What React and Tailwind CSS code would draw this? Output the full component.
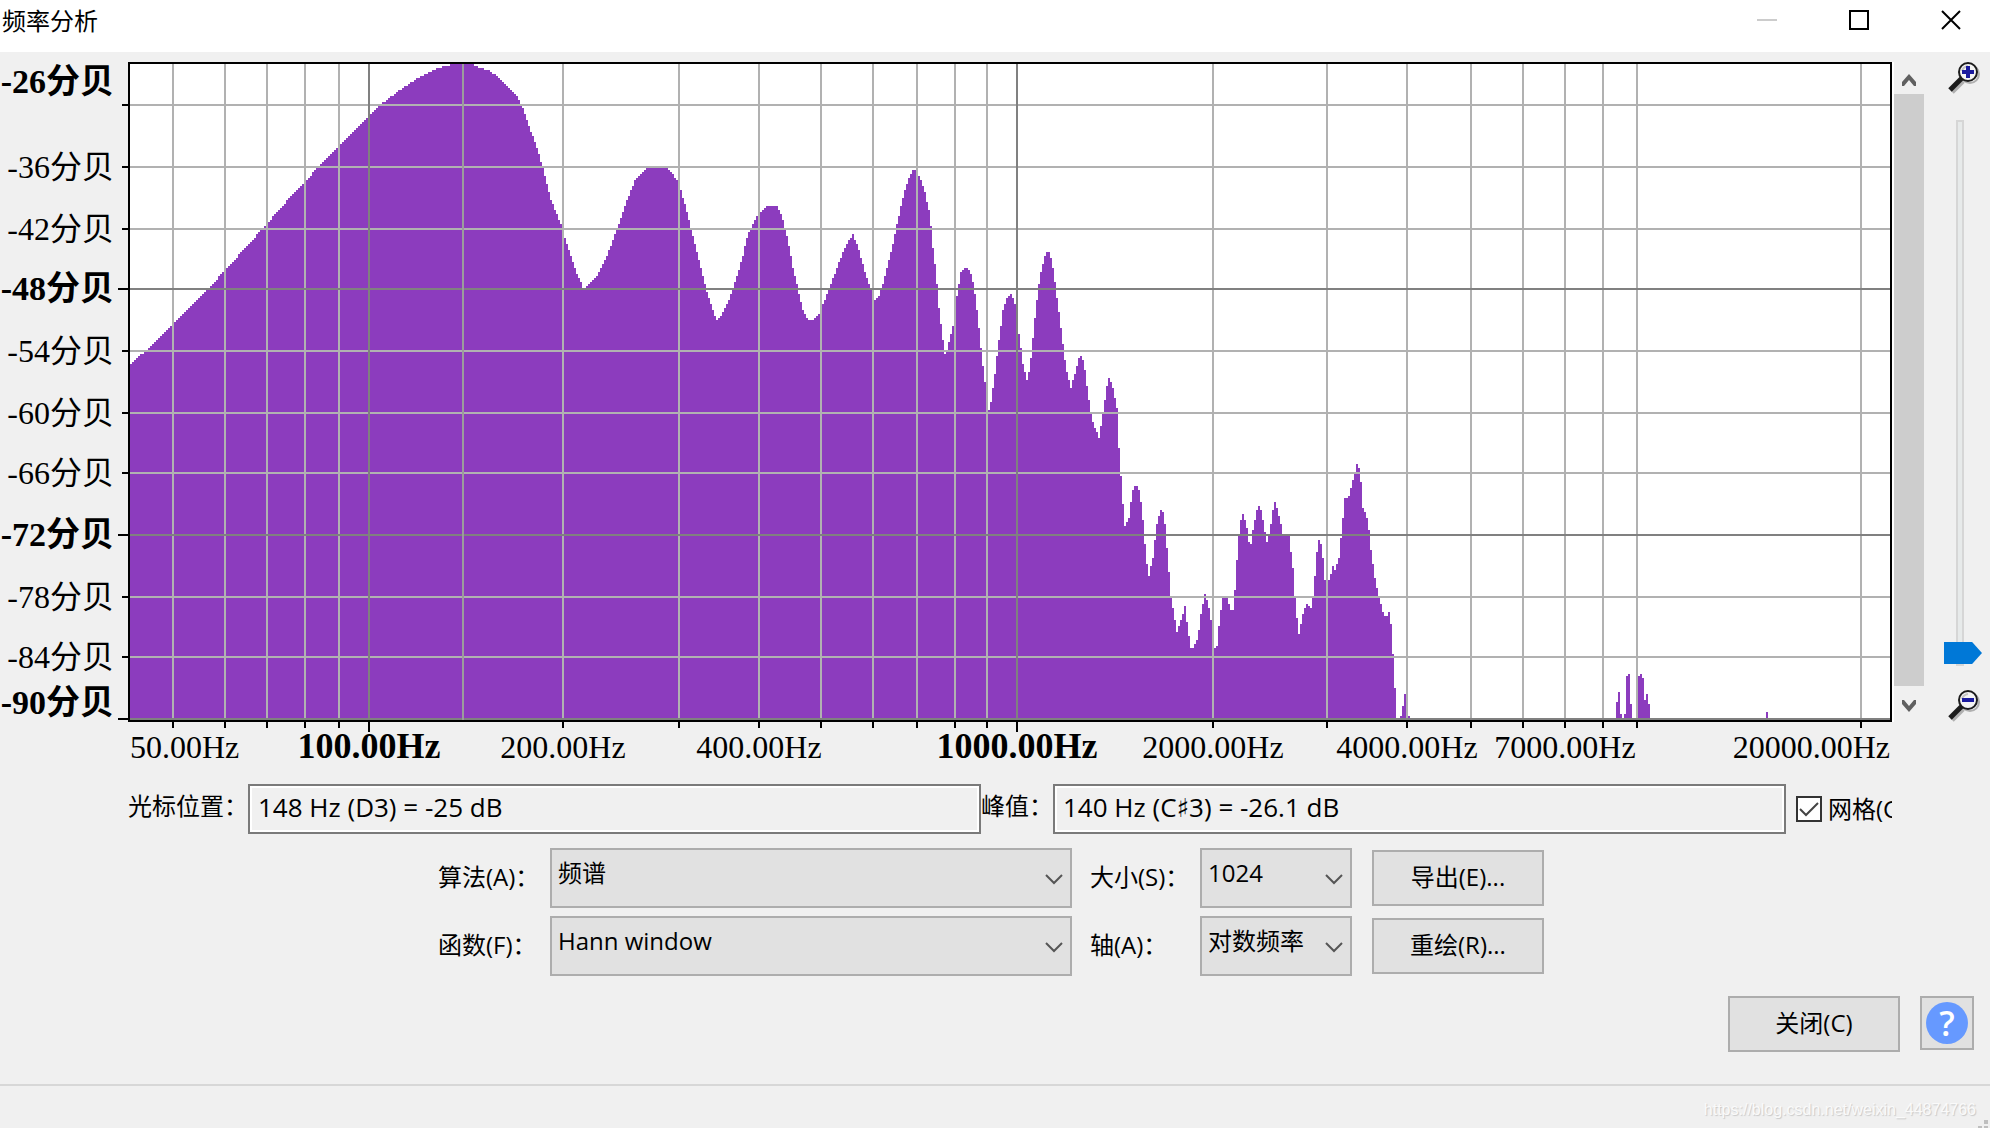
import { useState } from 'react';

// Plot area in drawing units: x 130..1890, y 64..720
const LEFT = 130;
const TOP = 64;
const WIDTH = 1760;
const HEIGHT = 656;
const BOTTOM = TOP + HEIGHT;

const SPECTRUM = [
  [130, 364], [147, 350], [173, 325], [210, 287], [225, 270], [238, 256], [266, 225], [278, 211],
  [295, 192], [305, 182], [320, 165], [339, 146], [369, 115], [379, 106], [393, 95], [406, 86],
  [421, 76], [433, 70], [446, 66], [452, 64], [473, 64], [480, 68], [488, 70], [501, 79],
  [509, 87], [518, 97], [522, 105], [528, 123], [537, 148], [543, 168], [551, 200], [562, 227],
  [568, 247], [577, 273], [583, 287], [585, 288], [592, 282], [598, 274], [606, 258], [613, 240],
  [619, 223], [627, 200], [635, 180], [641, 174], [646, 168], [668, 168], [672, 173], [677, 180],
  [681, 190], [687, 212], [693, 235], [699, 260], [706, 288], [712, 308], [717, 320], [721, 316],
  [728, 303], [733, 289], [738, 273], [743, 255], [748, 233], [754, 222], [759, 213], [766, 206],
  [777, 206], [780, 211], [784, 223], [788, 240], [793, 267], [799, 293], [804, 313], [808, 320],
  [812, 320], [820, 312], [825, 300], [831, 283], [837, 268], [843, 252], [849, 240], [853, 234],
  [859, 250], [865, 272], [871, 290], [875, 300], [880, 294], [886, 273], [892, 248], [898, 220],
  [903, 198], [908, 180], [913, 170], [916, 170], [920, 177], [925, 192], [930, 215], [933, 247],
  [936, 273], [939, 307], [943, 340], [945, 354], [948, 347], [953, 325], [957, 295], [961, 272],
  [964, 268], [968, 268], [972, 277], [975, 293], [979, 327], [982, 357], [985, 382], [989, 410],
  [991, 402], [995, 373], [999, 340], [1003, 310], [1007, 298], [1011, 294], [1015, 303],
  [1019, 333], [1023, 363], [1027, 380], [1030, 367], [1034, 327], [1038, 290], [1042, 267],
  [1046, 253], [1048, 250], [1052, 260], [1056, 290], [1061, 327], [1066, 367], [1071, 387],
  [1075, 373], [1080, 354], [1084, 363], [1088, 393], [1092, 420], [1099, 438], [1103, 413],
  [1107, 385], [1109, 378], [1113, 387], [1117, 407], [1119, 447], [1123, 503], [1125, 526],
  [1129, 517], [1132, 493], [1136, 484], [1140, 492], [1143, 520], [1146, 557], [1149, 576],
  [1153, 557], [1157, 523], [1161, 510], [1164, 513], [1167, 547], [1171, 597], [1177, 632],
  [1181, 620], [1185, 606], [1188, 630], [1191, 647], [1194, 647], [1198, 637], [1201, 613],
  [1205, 594], [1209, 607], [1211, 620], [1214, 648], [1217, 646], [1220, 617], [1223, 598],
  [1227, 598], [1231, 610], [1233, 610], [1236, 580], [1238, 540], [1241, 520], [1243, 514],
  [1247, 527], [1250, 550], [1253, 530], [1257, 510], [1260, 504], [1263, 520], [1267, 542],
  [1270, 532], [1273, 510], [1275, 502], [1279, 515], [1283, 533], [1289, 536], [1293, 567],
  [1296, 610], [1299, 634], [1303, 613], [1306, 604], [1311, 608], [1314, 593], [1316, 557],
  [1319, 540], [1322, 547], [1325, 580], [1329, 580], [1333, 566], [1335, 570], [1339, 557],
  [1342, 527], [1345, 498], [1349, 496], [1353, 480], [1357, 464], [1360, 470], [1363, 507],
  [1368, 520], [1371, 550], [1375, 577], [1379, 597], [1384, 616], [1387, 616], [1389, 612],
  [1391, 623], [1393, 653], [1395, 687],
];

// Isolated columns above the noise floor, each two units wide
const SPIKES = [
  [1400, 716], [1402, 706], [1404, 694], [1408, 716],
  [1616, 702], [1618, 692], [1620, 714], [1624, 714], [1626, 676], [1628, 674], [1630, 704],
  [1638, 676], [1640, 674], [1642, 678], [1644, 700], [1646, 694], [1648, 704],
  [1766, 712],
];

const FREQ_LINES = [
  { x: 173, label: '50.00Hz', anchor: 'start' },
  { x: 225 },
  { x: 267 },
  { x: 305 },
  { x: 339 },
  { x: 369, label: '100.00Hz', major: true },
  { x: 563, label: '200.00Hz' },
  { x: 679 },
  { x: 759, label: '400.00Hz' },
  { x: 821 },
  { x: 873 },
  { x: 917 },
  { x: 955 },
  { x: 987 },
  { x: 1017, label: '1000.00Hz', major: true },
  { x: 1213, label: '2000.00Hz' },
  { x: 1327 },
  { x: 1407, label: '4000.00Hz' },
  { x: 1471 },
  { x: 1523 },
  { x: 1565, label: '7000.00Hz' },
  { x: 1603 },
  { x: 1637 },
  { x: 1861, label: '20000.00Hz', anchor: 'end' },
];

const DB_LINES = [
  { y: 105 },
  { y: 167, label: '-36分贝' },
  { y: 229, label: '-42分贝' },
  { y: 289, label: '-48分贝', major: true },
  { y: 351, label: '-54分贝' },
  { y: 413, label: '-60分贝' },
  { y: 473, label: '-66分贝' },
  { y: 535, label: '-72分贝', major: true },
  { y: 597, label: '-78分贝' },
  { y: 657, label: '-84分贝' },
  { y: 719, label: '-90分贝', labelY: 703, major: true },
];

const CURSOR_X = 463;

const px = (x) => `${((x - LEFT) / WIDTH) * 100}%`;
const py = (y) => `${((y - TOP) / HEIGHT) * 100}%`;

function levelAt(x) {
  const i = SPECTRUM.findIndex((p) => p[0] >= x);
  if (i === 0) return SPECTRUM[0][1];
  const [x0, y0] = SPECTRUM[i - 1];
  const [x1, y1] = SPECTRUM[i];
  return y0 + ((y1 - y0) * (x - x0)) / (x1 - x0);
}

function spectrumPath() {
  let d = `M${LEFT} ${BOTTOM}`;
  for (let x = LEFT; x < 1395; x += 2) {
    const y = Math.round(levelAt(x + 1) / 2) * 2;
    d += `V${y}H${x + 2}`;
  }
  d += `V${BOTTOM}Z`;
  SPIKES.forEach(([x, y]) => {
    d += `M${x} ${BOTTOM}V${y}h2V${BOTTOM}Z`;
  });
  return d;
}

const SPECTRUM_PATH = spectrumPath();

function Plot({ grid }) {
  const minorX = FREQ_LINES.filter((l) => !l.major);
  const majorX = FREQ_LINES.filter((l) => l.major);
  const minorY = DB_LINES.filter((l) => !l.major);
  const majorY = DB_LINES.filter((l) => l.major);

  return (
    <svg
      viewBox={`${LEFT} ${TOP} ${WIDTH} ${HEIGHT}`}
      preserveAspectRatio="none"
      shapeRendering="crispEdges"
      className="block h-full w-full"
      role="img"
      aria-label="频谱图"
    >
      <path d={SPECTRUM_PATH} fill="#8c3cbe" />
      {grid && (
        <g strokeWidth="2">
          <g stroke="#b1b1b1">
            {minorX.map((l) => (
              <line key={l.x} x1={l.x} x2={l.x} y1={TOP} y2={BOTTOM} />
            ))}
            {minorY.map((l) => (
              <line key={l.y} x1={LEFT} x2={LEFT + WIDTH} y1={l.y} y2={l.y} />
            ))}
          </g>
          <g stroke="#808080">
            {majorX.map((l) => (
              <line key={l.x} x1={l.x} x2={l.x} y1={TOP} y2={BOTTOM} />
            ))}
            {majorY.map((l) => (
              <line key={l.y} x1={LEFT} x2={LEFT + WIDTH} y1={l.y} y2={l.y} />
            ))}
          </g>
        </g>
      )}
      <line x1={CURSOR_X} x2={CURSOR_X} y1={TOP} y2={BOTTOM} stroke="#9c9c9c" strokeWidth="2" />
    </svg>
  );
}

const AXIS_FONT = "font-['Liberation_Serif','Noto_Sans_CJK_SC',serif]";

function DbAxis() {
  return (
    <div className="w-32 shrink-0 py-0.5">
      <svg className={`block h-full w-full overflow-visible text-[32px] ${AXIS_FONT}`}>
        <text x="114" y={py(82)} dy="11" textAnchor="end" className="text-[34px] font-bold">
          -26分贝
        </text>
        {DB_LINES.map((l) => (
          <g key={l.y}>
            <line
              x1={l.major ? 118 : 122}
              x2="128"
              y1={py(l.y)}
              y2={py(l.y)}
              stroke="#000"
              strokeWidth="2"
              shapeRendering="crispEdges"
            />
            {l.label && (
              <text
                x="114"
                y={py(l.labelY || l.y)}
                dy="11"
                textAnchor="end"
                className={l.major ? 'text-[34px] font-bold' : ''}
              >
                {l.label}
              </text>
            )}
          </g>
        ))}
      </svg>
    </div>
  );
}

function FreqAxis() {
  const labelX = (l) => {
    if (l.anchor === 'start') return '0%';
    if (l.anchor === 'end') return '100%';
    return px(l.x);
  };

  return (
    <div className="h-[62px] shrink-0 pr-[100px] pl-[130px]">
      <svg className={`block h-full w-full overflow-visible text-[32px] ${AXIS_FONT}`}>
        {FREQ_LINES.map((l) => (
          <g key={l.x}>
            <line
              x1={px(l.x)}
              x2={px(l.x)}
              y1="0"
              y2={l.major ? 10 : 6}
              stroke="#000"
              strokeWidth="2"
              shapeRendering="crispEdges"
            />
            {l.label && (
              <text
                x={labelX(l)}
                y="36"
                textAnchor={l.anchor || 'middle'}
                className={l.major ? 'text-[36px] font-bold' : ''}
              >
                {l.label}
              </text>
            )}
          </g>
        ))}
      </svg>
    </div>
  );
}

function ScrollArrow({ down }) {
  return (
    <svg width="14" height="12" viewBox="0 0 14 12" className={down ? 'rotate-180' : ''}>
      <path d="M0 12V8L7 0l7 8v4h-2L7 6l-5 6z" fill="#606060" />
    </svg>
  );
}

function ScrollBar() {
  return (
    <div className="flex w-8 shrink-0 flex-col border-l-2 border-white">
      <button type="button" aria-label="向上滚动" className="flex h-8 items-center justify-center pt-1">
        <ScrollArrow />
      </button>
      <div className="flex-1 bg-[#cdcdcd]" />
      <button type="button" aria-label="向下滚动" className="flex h-9 items-center justify-center pt-1">
        <ScrollArrow down />
      </button>
    </div>
  );
}

function Magnifier({ plus }) {
  return (
    <svg width="32" height="32" viewBox="0 0 32 32" className="ml-2 shrink-0">
      <g fill="none" stroke="#b0b0b0">
        <circle cx="22" cy="12" r="9" strokeWidth="2" />
        <path d="M4 30L15 19" strokeWidth="5" />
      </g>
      <path d="M2 28L14 16" stroke="#1c1c1c" strokeWidth="5" />
      <circle cx="20" cy="10" r="9" fill="#f4f4f4" stroke="#1c1c1c" strokeWidth="2" />
      <path d="M14 9q1-4 6-5" fill="none" stroke="#c4c4c4" strokeWidth="2" />
      <path d={plus ? 'M14 10h12M20 4v12' : 'M14 10h12'} stroke="#1a1a9e" strokeWidth="4" />
    </svg>
  );
}

function ZoomSlider() {
  const [zoom, setZoom] = useState(0);

  return (
    <div className="mr-1.5 ml-3 flex w-12 shrink-0 flex-col items-center">
      <Magnifier plus />
      <input
        type="range"
        aria-label="缩放"
        min="0"
        max="100"
        value={zoom}
        onChange={(e) => setZoom(Number(e.target.value))}
        className="mt-[26px] mb-6 min-h-0 w-[38px] flex-1 appearance-none bg-transparent [direction:rtl] [writing-mode:vertical-lr] [&::-webkit-slider-runnable-track]:w-2 [&::-webkit-slider-runnable-track]:border-2 [&::-webkit-slider-runnable-track]:border-[#d6d6d6] [&::-webkit-slider-runnable-track]:bg-[#e7eaea] [&::-webkit-slider-thumb]:-ml-3.5 [&::-webkit-slider-thumb]:h-[22px] [&::-webkit-slider-thumb]:w-[38px] [&::-webkit-slider-thumb]:appearance-none [&::-webkit-slider-thumb]:bg-[#0078d7] [&::-webkit-slider-thumb]:[clip-path:polygon(0_0,74%_0,100%_50%,74%_100%,0_100%)]"
      />
      <Magnifier />
    </div>
  );
}

function Combo({ id, options }) {
  return (
    <div className="relative h-[60px]">
      <select
        id={id}
        className="h-full w-full appearance-none rounded-none border-2 border-[#adadad] bg-[#e1e1e1] pr-8 pb-2.5 pl-1.5"
      >
        {options.map((o) => (
          <option key={o}>{o}</option>
        ))}
      </select>
      <svg
        width="18"
        height="12"
        viewBox="0 0 18 12"
        className="pointer-events-none absolute top-[25px] right-[9px]"
      >
        <path d="M1 2l8 8 8-8" fill="none" stroke="#555" strokeWidth="2" />
      </svg>
    </div>
  );
}

function PushButton({ children }) {
  return (
    <button type="button" className="h-14 w-[172px] border-2 border-[#adadad] bg-[#e1e1e1] pb-0.5">
      {children}
    </button>
  );
}

function TitleBar() {
  return (
    <header className="h-[52px] shrink-0 bg-white">
      <div className="flex h-10 items-center justify-between pr-4 pl-0.5">
        <h1 className="pt-0.5">频率分析</h1>
        <div className="flex gap-[46px]">
          <button type="button" aria-label="最小化" disabled className="flex h-10 w-[46px] items-center justify-center">
            <svg width="20" height="20" viewBox="0 0 20 20">
              <path d="M0 10h20" stroke="#ccc" strokeWidth="2" />
            </svg>
          </button>
          <button type="button" aria-label="最大化" className="flex h-10 w-[46px] items-center justify-center">
            <svg width="20" height="20" viewBox="0 0 20 20">
              <path d="M1 1h18v18H1z" fill="none" stroke="#000" strokeWidth="2" />
            </svg>
          </button>
          <button type="button" aria-label="关闭窗口" className="flex h-10 w-[46px] items-center justify-center">
            <svg width="20" height="20" viewBox="0 0 20 20">
              <path d="M1 1l18 18M19 1L1 19" stroke="#000" strokeWidth="2" />
            </svg>
          </button>
        </div>
      </div>
    </header>
  );
}

const READOUT =
  'min-w-0 flex-1 border-2 border-[#7a7a7a] bg-[#f0f0f0] px-2 pb-1 text-[26px] shadow-[inset_0_0_0_2px_#fff]';

export default function App() {
  const [grid, setGrid] = useState(true);

  return (
    <div className="flex h-screen min-h-[800px] flex-col overflow-hidden bg-[#f0f0f0] font-['Open_Sans','DejaVu_Sans','Noto_Sans_CJK_SC',sans-serif] text-[24px] leading-8 text-black">
      <TitleBar />

      <main className="flex min-h-0 flex-1 flex-col pt-2.5">
        <section className="flex min-h-0 flex-1">
          <DbAxis />
          <div className="min-w-0 flex-1 border-2 border-black bg-white">
            <Plot grid={grid} />
          </div>
          <ScrollBar />
          <ZoomSlider />
        </section>
        <FreqAxis />

        <div className="flex h-[50px] shrink-0 pr-[98px] pl-32">
          <label htmlFor="cursor" className="w-[120px] shrink-0 pt-1.5">光标位置：</label>
          <input id="cursor" readOnly value="148 Hz (D3) = -25 dB" className={READOUT} />
          <label htmlFor="peak" className="w-[72px] shrink-0 pt-1.5">峰值：</label>
          <input id="peak" readOnly value="140 Hz (C♯3) = -26.1 dB" className={READOUT} />
          <label className="ml-2.5 flex w-24 shrink-0 items-center gap-1.5 overflow-hidden whitespace-nowrap">
            <span className="relative size-[26px] shrink-0">
              <input
                type="checkbox"
                checked={grid}
                onChange={(e) => setGrid(e.target.checked)}
                className="block size-full appearance-none border-2 border-[#333] bg-white"
              />
              {grid && (
                <svg viewBox="0 0 26 26" className="pointer-events-none absolute inset-0">
                  <path d="M4 13l6 6L22 7" fill="none" stroke="#444" strokeWidth="2" />
                </svg>
              )}
            </span>
            网格(G)
          </label>
        </div>

        <div className="mx-auto mt-3.5 grid shrink-0 grid-cols-[112px_522px_128px_152px_192px] items-center gap-y-2 pr-2">
          <label htmlFor="algorithm" className="pb-0.5">算法(A)：</label>
          <Combo id="algorithm" options={['频谱', '标准自相关', '立方根自相关', '增强自相关', '倒频谱']} />
          <label htmlFor="size" className="pb-0.5 pl-[18px]">大小(S)：</label>
          <Combo id="size" options={['1024', '128', '256', '512', '2048', '4096']} />
          <div className="flex justify-end">
            <PushButton>导出(E)...</PushButton>
          </div>

          <label htmlFor="window" className="pb-0.5">函数(F)：</label>
          <Combo id="window" options={['Hann window', 'Hamming window', 'Blackman window']} />
          <label htmlFor="axis" className="pb-0.5 pl-[18px]">轴(A)：</label>
          <Combo id="axis" options={['对数频率', '线性频率']} />
          <div className="flex justify-end">
            <PushButton>重绘(R)...</PushButton>
          </div>
        </div>

        <div className="mt-5 mb-8 flex shrink-0 justify-end gap-5 pr-4">
          <PushButton>关闭(C)</PushButton>
          <button
            type="button"
            aria-label="帮助"
            className="flex size-[54px] items-center justify-center border-2 border-[#adadad] bg-[#e1e1e1]"
          >
            <span className="flex size-[42px] items-center justify-center rounded-full bg-[#6699ff] text-[34px] font-semibold text-white">
              ?
            </span>
          </button>
        </div>
      </main>

      <footer className="flex h-11 shrink-0 items-end justify-end border-t-2 border-[#d7d7d7]">
        <p className="pb-0.5 font-['Liberation_Sans',sans-serif] text-[16px] text-[#fafafa] [text-shadow:1px_1px_1px_#c8c8c8]">
          https://blog.csdn.net/weixin_44874766
        </p>
        <svg width="12" height="8" viewBox="0 0 12 8" className="mr-0.5 shrink-0">
          <path d="M8 0h4v4H8zM2 6h4v2H2zM8 6h4v2H8z" fill="#bfbfbf" />
        </svg>
      </footer>
    </div>
  );
}
